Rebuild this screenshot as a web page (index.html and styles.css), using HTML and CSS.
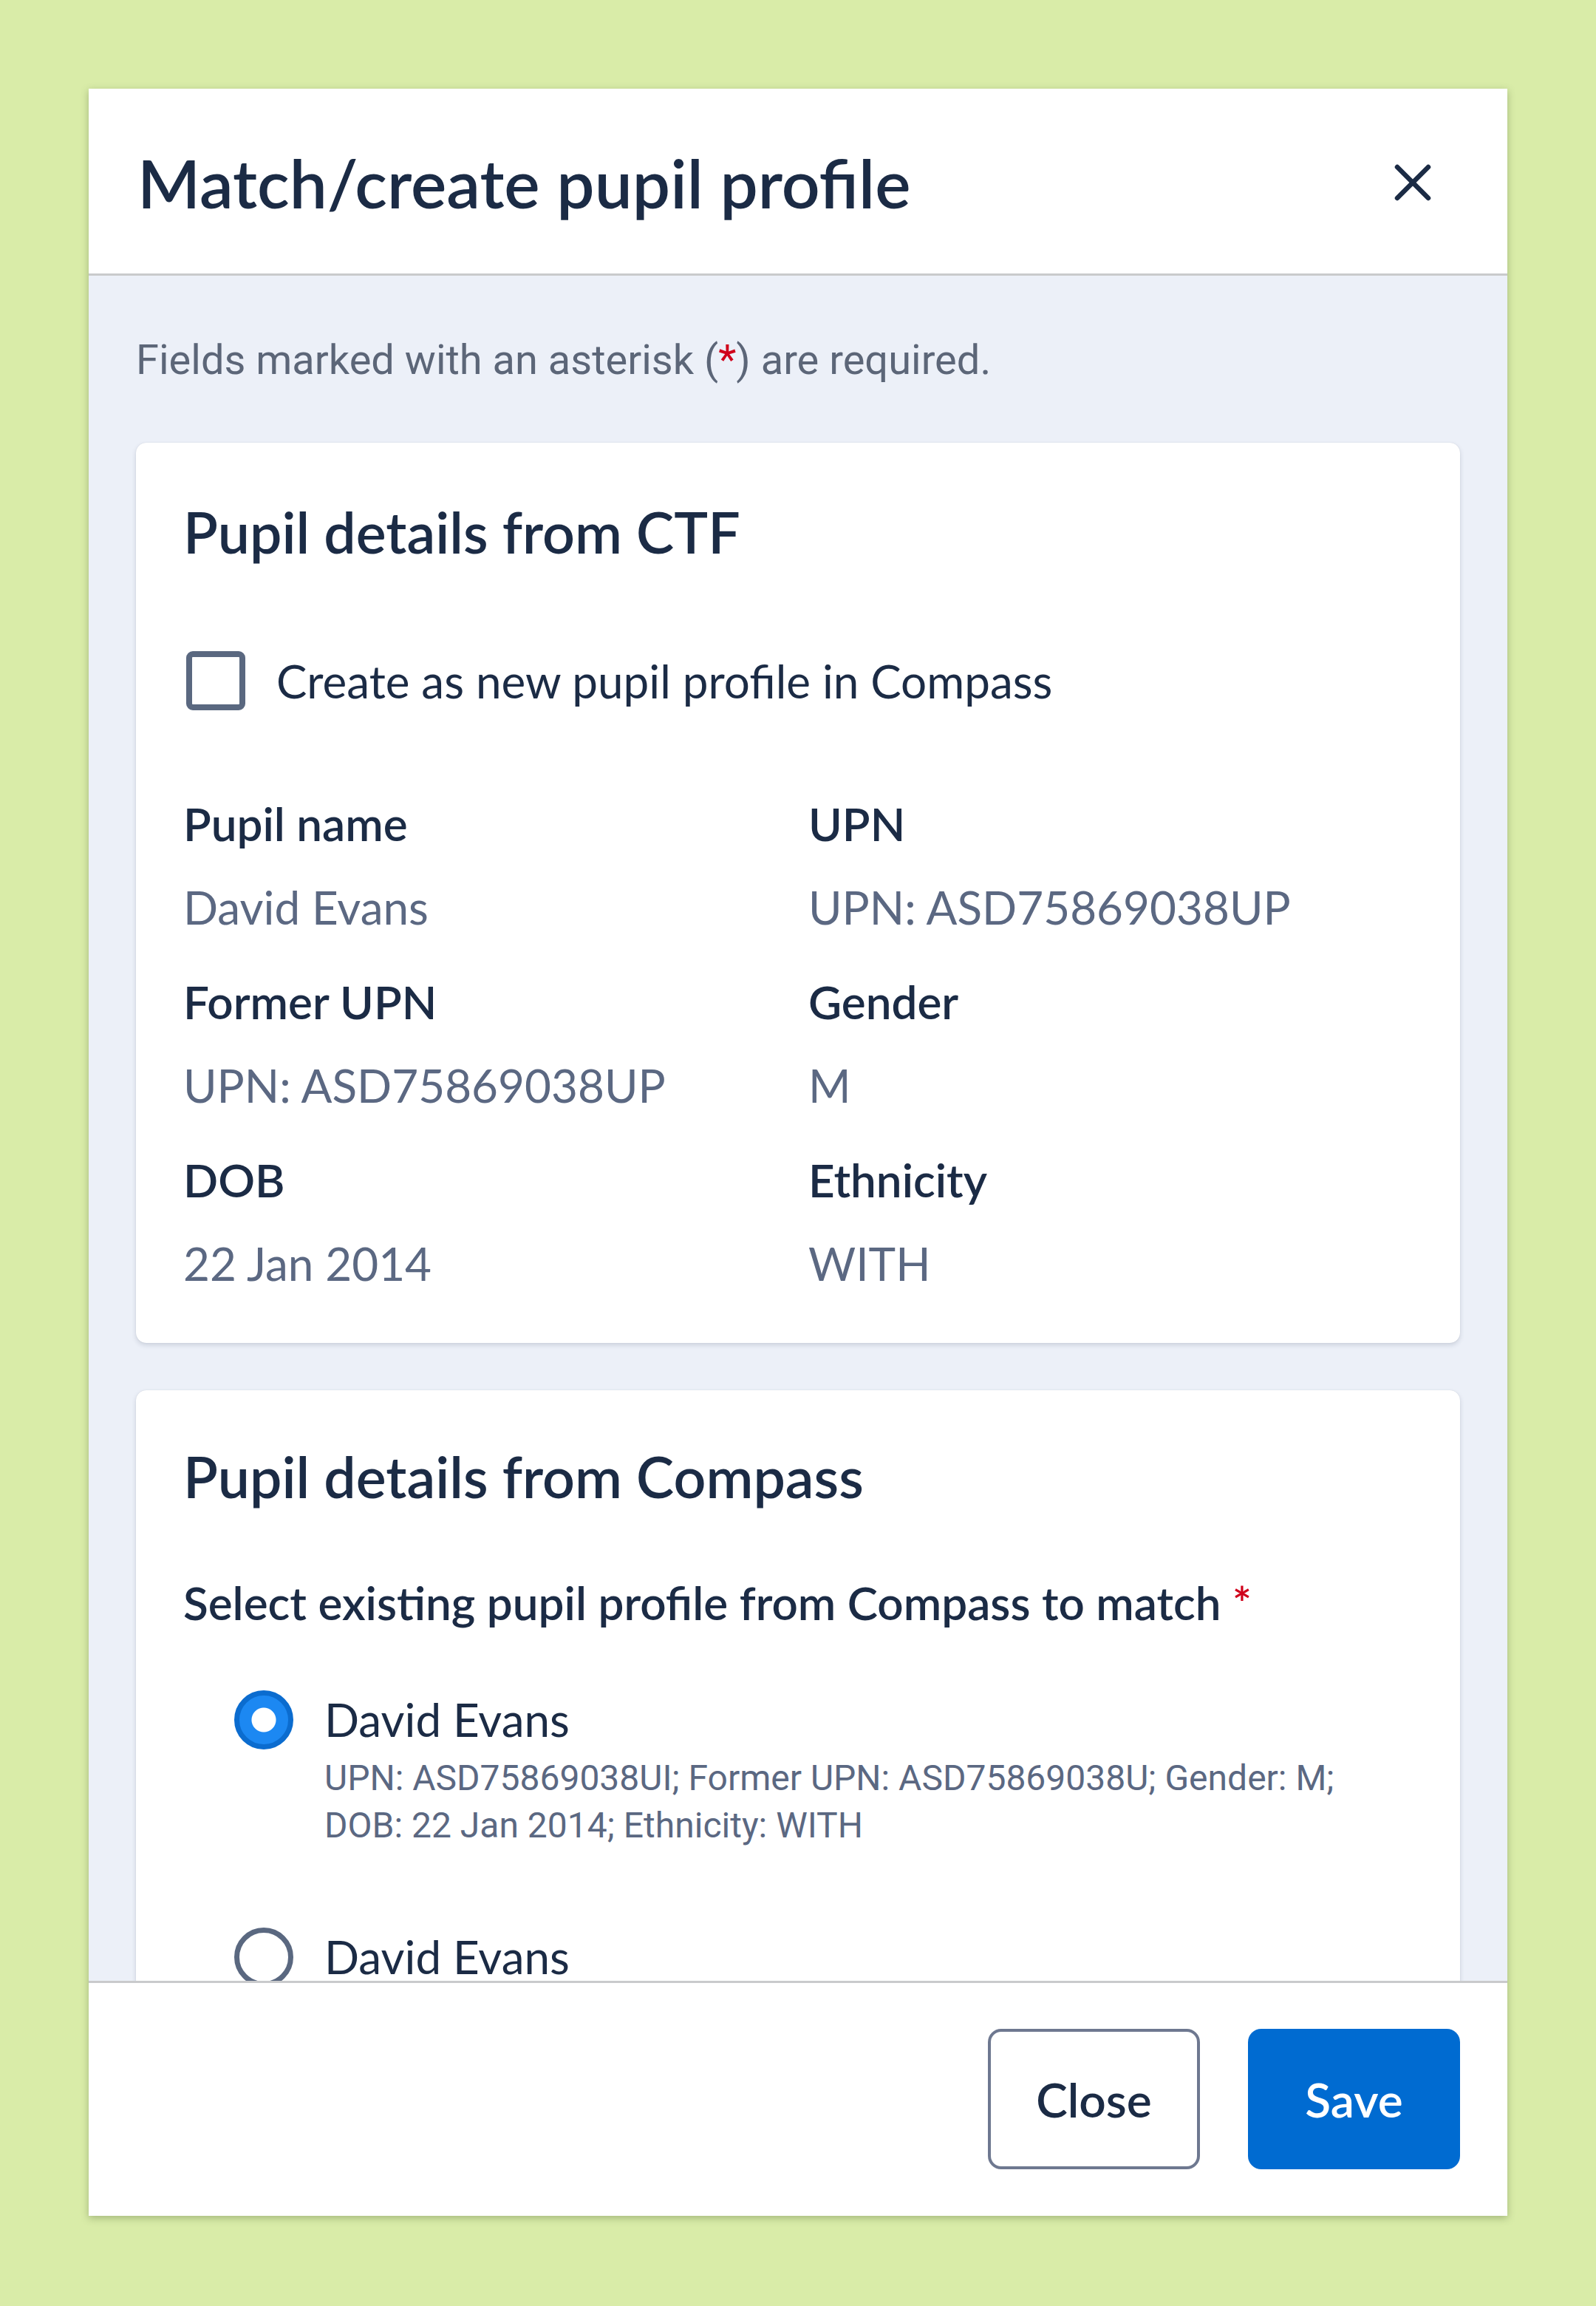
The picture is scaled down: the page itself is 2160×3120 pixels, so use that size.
FILE: index.html
```html
<!DOCTYPE html>
<html lang="en">
<head>
<meta charset="utf-8">
<title>Match/create pupil profile</title>
<link rel="stylesheet" href="styles.css">
</head>
<body>
<div class="modal">
  <header class="modal-header">
    <h1 class="modal-title">Match/create pupil profile</h1>
    <button class="icon-close" aria-label="Close">
      <svg width="50" height="50" viewBox="0 0 50 50"><path d="M4 4L46 46M46 4L4 46" stroke="#1b2b45" stroke-width="6.5" stroke-linecap="round" fill="none"/></svg>
    </button>
  </header>
  <div class="modal-body">
    <p class="hint">Fields marked with an asterisk (<span class="req">*</span>) are required.</p>

    <section class="card">
      <h2 class="card-title">Pupil details from CTF</h2>
      <label class="check-row">
        <span class="checkbox"></span>
        <span class="check-text">Create as new pupil profile in Compass</span>
      </label>
      <div class="details">
        <div class="field"><div class="label">Pupil name</div><div class="value">David Evans</div></div>
        <div class="field"><div class="label">UPN</div><div class="value">UPN: ASD75869038UP</div></div>
        <div class="field"><div class="label">Former UPN</div><div class="value">UPN: ASD75869038UP</div></div>
        <div class="field"><div class="label">Gender</div><div class="value">M</div></div>
        <div class="field"><div class="label">DOB</div><div class="value">22 Jan 2014</div></div>
        <div class="field"><div class="label">Ethnicity</div><div class="value">WITH</div></div>
      </div>
    </section>

    <section class="card card-compass">
      <h2 class="card-title">Pupil details from Compass</h2>
      <div class="select-label">Select existing pupil profile from Compass to match <span class="req">*</span></div>
      <div class="radio-list">
        <div class="radio-item">
          <span class="radio radio-on"></span>
          <div class="radio-text">
            <div class="radio-label">David Evans</div>
            <div class="radio-desc">UPN: ASD75869038UI; Former UPN: ASD75869038U; Gender: M;<br>DOB: 22 Jan 2014; Ethnicity: WITH</div>
          </div>
        </div>
        <div class="radio-item">
          <span class="radio"></span>
          <div class="radio-text">
            <div class="radio-label">David Evans</div>
            <div class="radio-desc">UPN: ASD75869038UI; Former UPN: ASD75869038U; Gender: M;<br>DOB: 22 Jan 2014; Ethnicity: WITH</div>
          </div>
        </div>
      </div>
    </section>
  </div>
  <footer class="modal-footer">
    <button class="btn btn-secondary">Close</button>
    <button class="btn btn-primary">Save</button>
  </footer>
</div>
</body>
</html>
```

FILE: styles.css
```css
* { box-sizing: border-box; }

html, body {
  margin: 0;
  padding: 0;
}

body {
  background: #d9eca8;
  font-family: Lato, "Open Sans", sans-serif;
  color: #1b2b45;
  padding: 120px;
  width: 2160px;
  height: 3120px;
}

.modal {
  width: 1920px;
  height: 2878px;
  background: #ffffff;
  display: flex;
  flex-direction: column;
  box-shadow: 0 3px 10px rgba(60, 80, 40, 0.35);
}

.modal-header {
  display: flex;
  align-items: center;
  justify-content: space-between;
  padding: 72px 103px 68px 66px;
  border-bottom: 3px solid #c9cacc;
  flex: none;
}

.modal-title {
  margin: 0;
  font-size: 91px;
  line-height: 110px;
  font-weight: 600;
  color: #1b2b45;
}

.icon-close {
  border: 0;
  background: none;
  padding: 0;
  width: 50px;
  height: 50px;
  display: block;
}
.icon-close svg { display: block; }

.modal-body {
  flex: 1;
  min-height: 0;
  overflow: hidden;
  background: #ecf0f8;
  padding: 82px 64px 0 64px;
}

.hint {
  margin: 0 0 80px 0;
  font-family: Roboto, "Liberation Sans", sans-serif;
  font-size: 56px;
  line-height: 64px;
  color: #5c6678;
}

.req { color: #d0021b; }

.card {
  background: #ffffff;
  border-radius: 14px;
  box-shadow: 0 3px 6px rgba(40, 50, 80, 0.16), 0 0 1px rgba(40, 50, 80, 0.2);
  padding: 74px 64px 68px 64px;
  margin-bottom: 64px;
}

.card-compass {
  padding-top: 70px;
}

.card-title {
  margin: 0;
  font-size: 77px;
  line-height: 92px;
  font-weight: 600;
  color: #1b2b45;
}

.check-row {
  display: flex;
  align-items: center;
  gap: 42px;
  margin-top: 116px;
  padding-left: 4px;
}

.checkbox {
  width: 80px;
  height: 80px;
  border: 8px solid #5a6880;
  border-radius: 9px;
  flex: none;
}

.check-text {
  font-size: 62px;
  line-height: 80px;
  color: #1b2b45;
}

.details {
  display: grid;
  grid-template-columns: 1fr 1fr;
  column-gap: 28px;
  row-gap: 48px;
  margin-top: 113px;
}

.label {
  font-size: 62px;
  line-height: 80px;
  font-weight: 600;
  color: #1b2b45;
}

.value {
  margin-top: 33px;
  font-size: 62px;
  line-height: 80px;
  color: #5b6882;
}

.select-label {
  margin-top: 85px;
  font-size: 62px;
  line-height: 80px;
  font-weight: 600;
  color: #1b2b45;
}

.radio-list {
  margin-top: 78px;
  padding-left: 69px;
  display: flex;
  flex-direction: column;
  gap: 105px;
}

.radio-item {
  display: flex;
  align-items: flex-start;
  gap: 42px;
}

.radio {
  width: 80px;
  height: 80px;
  border-radius: 50%;
  border: 7px solid #5a6880;
  flex: none;
  margin-top: 1px;
}

.radio-on {
  border-color: #0b6ccf;
  background: radial-gradient(circle, #ffffff 0 16px, #1c88f2 17px);
}

.radio-label {
  font-size: 62px;
  line-height: 80px;
  color: #1b2b45;
}

.radio-desc {
  margin-top: 8px;
  font-family: Roboto, "Liberation Sans", sans-serif;
  font-size: 48px;
  line-height: 64px;
  color: #5b6882;
}

.modal-footer {
  flex: none;
  border-top: 3px solid #c9cacc;
  display: flex;
  justify-content: flex-end;
  gap: 65px;
  padding: 62px 64px 63px 64px;
}

.btn {
  height: 190px;
  width: 287px;
  border-radius: 18px;
  font-family: Lato, "Open Sans", sans-serif;
  font-size: 64px;
  font-weight: 600;
  display: flex;
  align-items: center;
  justify-content: center;
  padding: 0;
}

.btn-secondary {
  background: #ffffff;
  border: 4px solid #6e7890;
  color: #1b2b45;
}

.btn-primary {
  background: #006bd1;
  border: 0;
  color: #ffffff;
}
```
